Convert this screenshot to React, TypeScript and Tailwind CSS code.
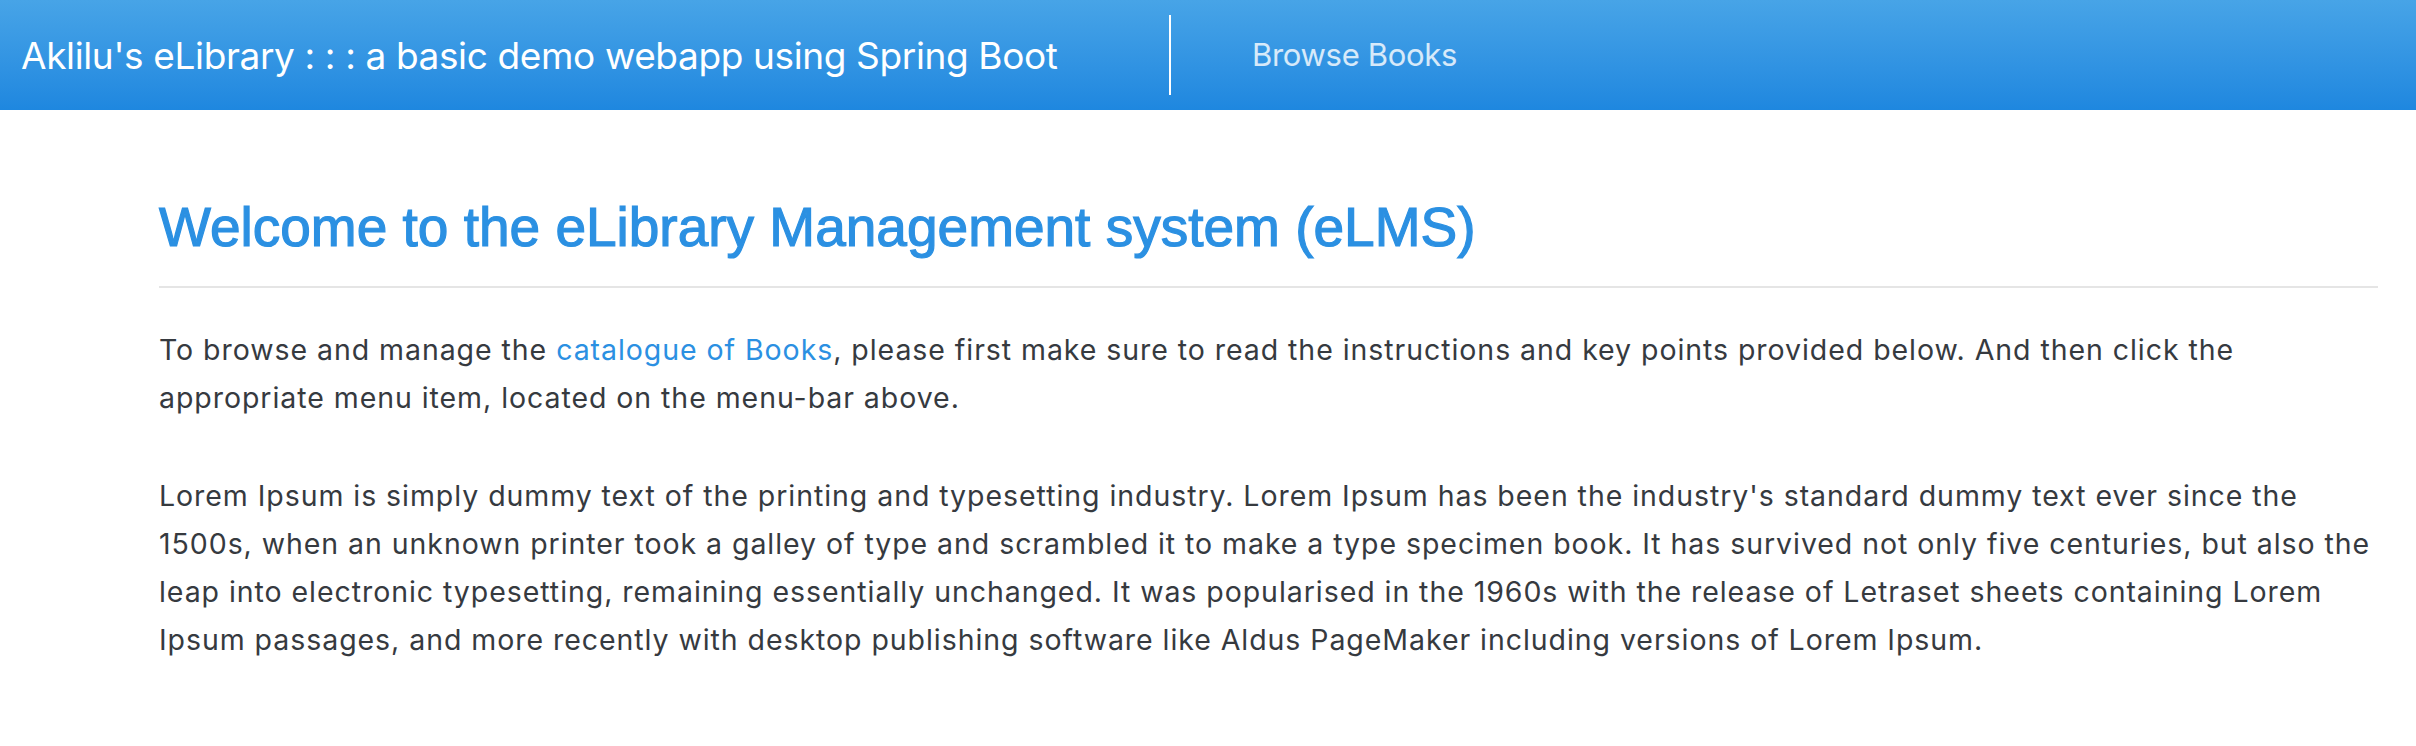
export default function App() {
  return (
    <main className="min-h-screen bg-white" style={{ fontFamily: 'Inter, "Noto Sans", sans-serif' }}>
      <header className="flex h-[110px] items-center bg-gradient-to-b from-[#47a4e7] to-[#1e87df] text-white">
        <div className="w-[1169px] shrink-0 pl-[21px] text-[37px] leading-none tracking-[-0.01em]">
          Aklilu's eLibrary : : : a basic demo webapp using Spring Boot
        </div>
        <div className="h-[80px] w-[2px] bg-white" />
        <nav className="pl-[81px]">
          <a href="#" className="text-[31px] tracking-[-0.01em] text-white/80">
            Browse Books
          </a>
        </nav>
      </header>

      <section className="pl-[159px] pr-[38px] pt-[84px]">
        <h1
          className="text-[55px] leading-[1.2] text-[#2b90e2] [-webkit-text-stroke:1.2px_#2b90e2]"
          style={{ fontFamily: '"Liberation Sans", Arial, sans-serif' }}
        >
          Welcome to the eLibrary Management system (eLMS)
        </h1>
        <hr className="mt-[26px] border-t-2 border-[#e5e5e5]" />

        <div className="mr-[-10px] mt-[38px] text-[28.5px] leading-[48px] tracking-[0.033em] text-[#363a3f]">
          <p>
            To browse and manage the{' '}
            <a href="#" className="text-[#2b90e2]">
              catalogue of Books
            </a>
            , please first make sure to read the instructions and key points provided below. And then click the
            appropriate menu item, located on the menu-bar above.
          </p>
          <p className="mt-[50px]">
            Lorem Ipsum is simply dummy text of the printing and typesetting industry. Lorem Ipsum has been the
            industry's standard dummy text ever since the 1500s, when an unknown printer took a galley of type and
            scrambled it to make a type specimen book. It has survived not only five centuries, but also the leap into
            electronic typesetting, remaining essentially unchanged. It was popularised in the 1960s with the release
            of Letraset sheets containing Lorem Ipsum passages, and more recently with desktop publishing software like
            Aldus PageMaker including versions of Lorem Ipsum.
          </p>
        </div>
      </section>
    </main>
  );
}
